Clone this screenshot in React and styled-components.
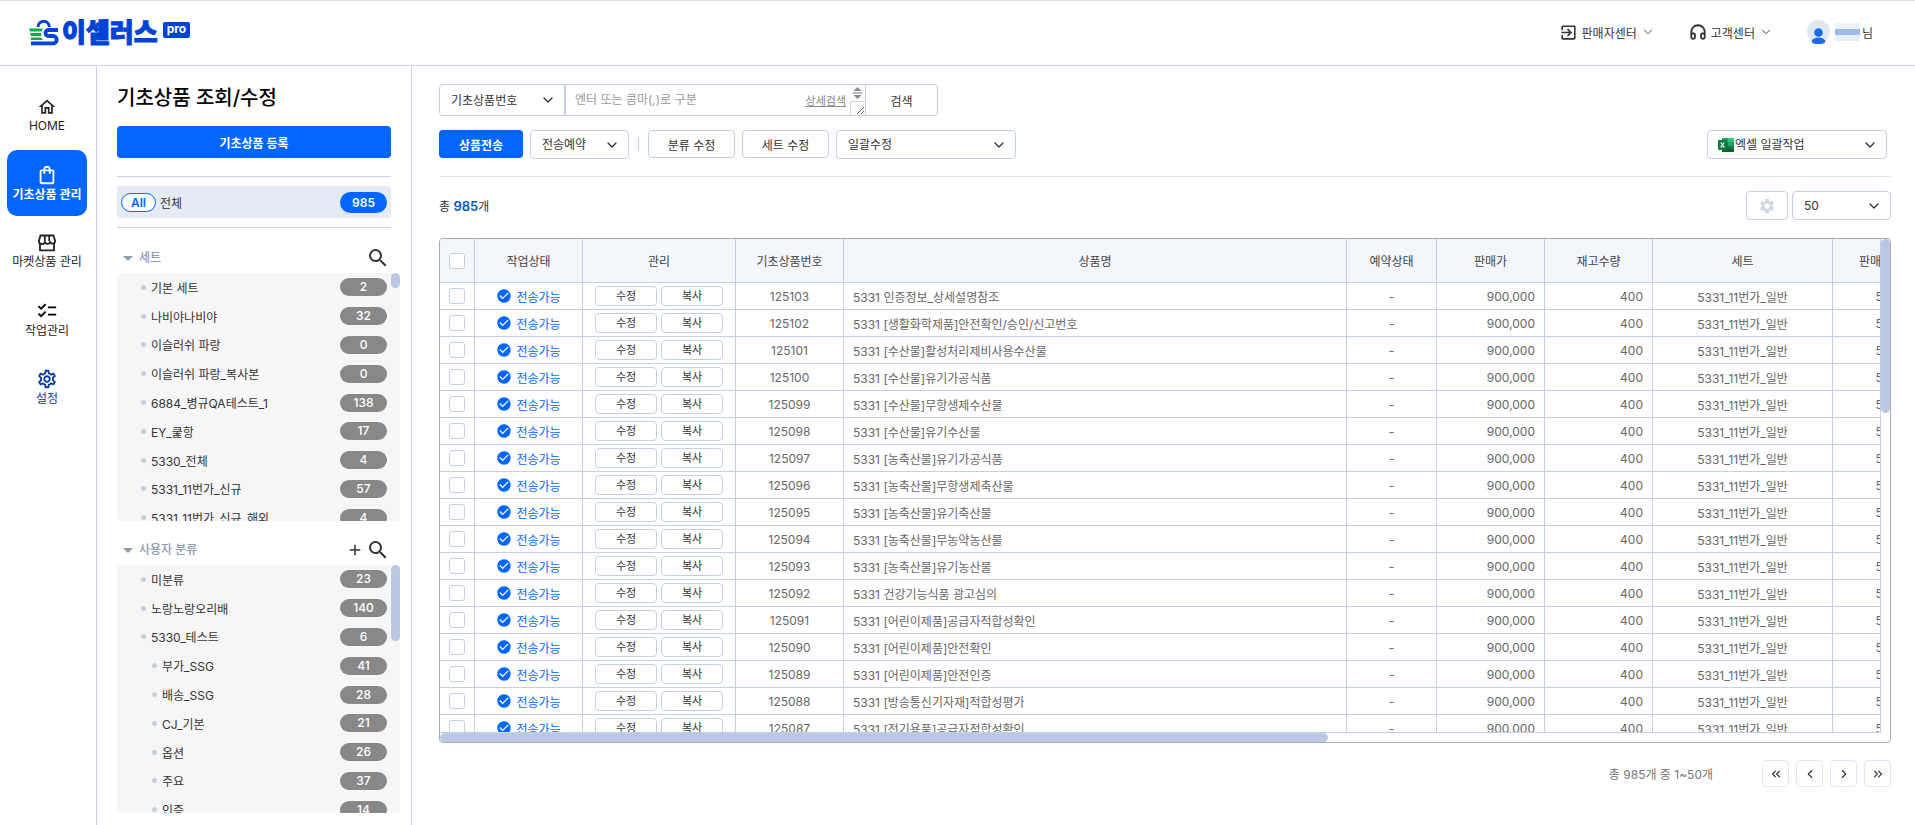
import React, { useState } from "react";
import styled, { createGlobalStyle } from "styled-components";
import {
  MdAdd,
  MdCheckCircle,
  MdChecklist,
  MdOutlineExitToApp,
  MdOutlineHome,
  MdOutlineSettings,
  MdOutlineShoppingBag,
  MdSearch,
  MdSettings,
} from "react-icons/md";
import {
  ChevronDown,
  ChevronLeft,
  ChevronRight,
  ChevronsLeft,
  ChevronsRight,
  Headphones,
} from "lucide-react";

const sets = [
  { name: "기본 세트", count: 2 },
  { name: "나비야나비야", count: 32 },
  { name: "이슬러쉬 파랑", count: 0 },
  { name: "이슬러쉬 파랑_복사본", count: 0 },
  { name: "6884_병규QA테스트_1", count: 138 },
  { name: "EY_쿭항", count: 17 },
  { name: "5330_전체", count: 4 },
  { name: "5331_11번가_신규", count: 57 },
  { name: "5331_11번가_신규_해외", count: 4 },
];

const categories = [
  { name: "미분류", count: 23 },
  { name: "노랑노랑오리배", count: 140 },
  { name: "5330_테스트", count: 6 },
  { name: "부가_SSG", count: 41, sub: true },
  { name: "배송_SSG", count: 28, sub: true },
  { name: "CJ_기본", count: 21, sub: true },
  { name: "옵션", count: 26, sub: true },
  { name: "주요", count: 37, sub: true },
  { name: "인증", count: 14, sub: true },
];

const products = [
  "5331 인증정보_상세설명참조",
  "5331 [생활화학제품]안전확인/승인/신고번호",
  "5331 [수산물]활성처리제비사용수산물",
  "5331 [수산물]유기가공식품",
  "5331 [수산물]무항생제수산물",
  "5331 [수산물]유기수산물",
  "5331 [농축산물]유기가공식품",
  "5331 [농축산물]무항생제축산물",
  "5331 [농축산물]유기축산물",
  "5331 [농축산물]무농약농산물",
  "5331 [농축산물]유기농산물",
  "5331 건강기능식품 광고심의",
  "5331 [어린이제품]공급자적합성확인",
  "5331 [어린이제품]안전확인",
  "5331 [어린이제품]안전인증",
  "5331 [방송통신기자재]적합성평가",
  "5331 [전기용품]공급자적합성확인",
].map((name, index) => ({ id: 125103 - index, name }));

function Logo() {
  return (
    <LogoLink href="#" aria-label="이셀러스 pro">
      <svg width="30" height="26" viewBox="0 0 30 26" fill="none">
        <path d="M9 7a5.700 5.700 0 0 1 11.400 0" stroke="#0043d6" strokeWidth="3" />
        <path d="M0 8.500h14l-1.500 3H1z" fill="#00b140" />
        <path d="M1 13h11l.5 3H2z" fill="#00b140" />
        <path d="M2 17.500h10l2 2.500H2z" fill="#00b140" />
        <path
          d="M29 10H19.500a3 3 0 0 0 0 6H24a3.700 3.700 0 0 1 0 7.400H2"
          stroke="#0043d6"
          strokeWidth="3.800"
        />
      </svg>
      <Wordmark>이셀러스</Wordmark>
      <ProTag>pro</ProTag>
    </LogoLink>
  );
}

function MarketIcon() {
  return (
    <svg width="20" height="20" viewBox="0 0 20 20" fill="none" stroke="#222" strokeWidth="1.800">
      <path d="M3.500 2.500h13l1.600 5.500a2.500 2.500 0 0 1-5 .2 2.600 2.600 0 0 1-5.200 0A2.500 2.500 0 0 1 1.900 8z" />
      <path d="M7.800 2.500v5.500M12.200 2.500v5.500M3 10v7.300h14V10" />
    </svg>
  );
}

function ExcelIcon() {
  return (
    <svg width="16" height="16" viewBox="0 0 16 16">
      <path d="M4 1h6v7H4z" fill="#21a366" />
      <path d="M10 1h6v4h-6z" fill="#33c481" />
      <path d="M4 5h6v5H4z" fill="#107c41" />
      <path d="M10 5h6v5h-6z" fill="#21a366" />
      <path d="M4 10h12v5H4z" fill="#185c37" />
      <path d="M10 9h6v3h-6z" fill="#107c41" />
      <rect x="0" y="3" width="9" height="10" rx="1" fill="#107c41" />
      <path d="M2.800 5.500l3.400 5M6.200 5.500l-3.400 5" stroke="#fff" strokeWidth="1.300" />
    </svg>
  );
}

function SelectBox({ label, options, width, icon, joined }) {
  return (
    <SelectWrap $width={width} $joined={joined}>
      {icon}
      <select aria-label={label}>
        {options.map((option) => (
          <option key={option}>{option}</option>
        ))}
      </select>
      <ChevronDown size={16} strokeWidth={2} />
    </SelectWrap>
  );
}

function TreeSection({ title, items, addable, thumb }) {
  return (
    <section>
      <SectionHead>
        <Triangle />
        <h2>{title}</h2>
        {addable && (
          <IconButton aria-label="분류 추가">
            <MdAdd size={18} />
          </IconButton>
        )}
        <IconButton aria-label={`${title} 검색`}>
          <MdSearch size={24} />
        </IconButton>
      </SectionHead>
      <TreeBox>
        <Tree>
          {items.map((item) => (
            <TreeItem key={item.name} $sub={item.sub}>
              <a href="#">{item.name}</a>
              <Count>{item.count}</Count>
            </TreeItem>
          ))}
        </Tree>
        <TreeThumb $height={thumb} />
      </TreeBox>
    </section>
  );
}

export default function App() {
  const [checked, setChecked] = useState([]);
  const allChecked = checked.length === products.length;

  function toggle(id) {
    setChecked(
      checked.includes(id) ? checked.filter((c) => c !== id) : [...checked, id]
    );
  }
  function toggleAll() {
    setChecked(allChecked ? [] : products.map((p) => p.id));
  }

  return (
    <Page>
      <GlobalStyle />
      <Header>
        <Logo />
        <TopMenu>
          <TopButton>
            <MdOutlineExitToApp size={19} />
            판매자센터
            <ChevronDown size={14} strokeWidth={1.5} />
          </TopButton>
          <TopButton>
            <Headphones size={18} strokeWidth={2.4} />
            고객센터
            <ChevronDown size={14} strokeWidth={1.5} />
          </TopButton>
          <UserButton>
            <svg width="23" height="24" viewBox="0 0 23 24">
              <circle cx="11.500" cy="11.500" r="11.500" fill="#e1e7f2" />
              <circle cx="11.500" cy="12.500" r="4.300" fill="#1a6be6" />
              <path d="M4.500 22a7 4.500 0 0 1 14 0 11 11 0 0 1-14 0z" fill="#1a6be6" />
            </svg>
            <MaskedName />님
          </UserButton>
        </TopMenu>
      </Header>
      <Body>
        <Nav>
          <NavItem href="#">
            <MdOutlineHome size={20} />
            HOME
          </NavItem>
          <NavItem href="#" $active>
            <MdOutlineShoppingBag size={22} />
            기초상품 관리
          </NavItem>
          <NavItem href="#">
            <MarketIcon />
            마켓상품 관리
          </NavItem>
          <NavItem href="#">
            <MdChecklist size={22} color="#000" />
            작업관리
          </NavItem>
          <NavItem href="#" $blue>
            <MdOutlineSettings size={22} />
            설정
          </NavItem>
        </Nav>
        <Sidebar>
          <SideTop>
            <h1>기초상품 조회/수정</h1>
            <RegisterButton>기초상품 등록</RegisterButton>
            <AllWrap>
              <AllLink href="#">
                <AllPill>All</AllPill>
                전체
                <AllCount>985</AllCount>
              </AllLink>
            </AllWrap>
          </SideTop>
          <TreeSection title="세트" items={sets} thumb={15} />
          <TreeSection title="사용자 분류" items={categories} thumb={76} addable />
        </Sidebar>
        <Main>
          <SearchBar>
            <SelectBox label="검색 조건" options={["기초상품번호"]} width={126} joined />
            <SearchField>
              <textarea aria-label="검색어" placeholder="엔터 또는 콤마(,)로 구분" />
              <a href="#">상세검색</a>
              <svg width="15" height="30" viewBox="0 0 15 30">
                <path d="M0 0h15v30H0z" fill="#fcfcfc" />
                <path d="M7.500 2l4 4h-8zM7.500 14l4-4h-8z" fill="#8a8a8a" />
                <path d="M3 8h9" stroke="#777" />
                <path d="M.5 30V16.500H15" fill="none" stroke="#d5d5d5" />
                <path d="M7 29l7-7M11 29l3-3" stroke="#555" />
              </svg>
            </SearchField>
            <SearchButton>검색</SearchButton>
          </SearchBar>
          <Toolbar>
            <PrimaryButton>상품전송</PrimaryButton>
            <SelectBox label="전송예약" options={["전송예약"]} width={99} />
            <Divider />
            <PlainButton>분류 수정</PlainButton>
            <PlainButton>세트 수정</PlainButton>
            <SelectBox label="일괄수정" options={["일괄수정"]} width={180} />
            <ToolbarEnd>
              <SelectBox
                label="엑셀 일괄작업"
                options={["엑셀 일괄작업"]}
                width={180}
                icon={<ExcelIcon />}
              />
            </ToolbarEnd>
          </Toolbar>
          <Summary>
            <p>
              총 <strong>985</strong>개
            </p>
            <GearButton aria-label="목록 설정">
              <MdSettings size={18} />
            </GearButton>
            <SelectBox label="목록 개수" options={["50", "100"]} width={99} />
          </Summary>
          <TableFrame>
            <TableView>
              <Table>
                <colgroup>
                  <col width="35" />
                  <col width="108" />
                  <col width="153" />
                  <col width="108" />
                  <col />
                  <col width="90" />
                  <col width="108" />
                  <col width="108" />
                  <col width="180" />
                  <col width="108" />
                </colgroup>
                <thead>
                  <tr>
                    <th>
                      <Check
                        type="checkbox"
                        aria-label="전체 선택"
                        checked={allChecked}
                        onChange={toggleAll}
                      />
                    </th>
                    <th>작업상태</th>
                    <th>관리</th>
                    <th>기초상품번호</th>
                    <th>상품명</th>
                    <th>예약상태</th>
                    <th>판매가</th>
                    <th>재고수량</th>
                    <th>세트</th>
                    <th>판매자코드</th>
                  </tr>
                </thead>
                <tbody>
                  {products.map((product) => (
                    <tr key={product.id}>
                      <td>
                        <Check
                          type="checkbox"
                          aria-label={`${product.id} 선택`}
                          checked={checked.includes(product.id)}
                          onChange={() => toggle(product.id)}
                        />
                      </td>
                      <td>
                        <Status>
                          <MdCheckCircle size={16} />
                          전송가능
                        </Status>
                      </td>
                      <td>
                        <Actions>
                          <RowButton>수정</RowButton>
                          <RowButton>복사</RowButton>
                        </Actions>
                      </td>
                      <td>{product.id}</td>
                      <NameCell>{product.name}</NameCell>
                      <td>-</td>
                      <NumberCell>900,000</NumberCell>
                      <NumberCell>400</NumberCell>
                      <td>5331_11번가_일반</td>
                      <td>533</td>
                    </tr>
                  ))}
                </tbody>
              </Table>
            </TableView>
            <ScrollTrackY>
              <ThumbY />
            </ScrollTrackY>
            <ScrollTrackX>
              <ThumbX />
            </ScrollTrackX>
          </TableFrame>
          <Pagination>
            <p>총 985개 중 1~50개</p>
            <PageButton aria-label="처음">
              <ChevronsLeft size={14} />
            </PageButton>
            <PageButton aria-label="이전">
              <ChevronLeft size={14} />
            </PageButton>
            <PageButton aria-label="다음">
              <ChevronRight size={14} />
            </PageButton>
            <PageButton aria-label="마지막">
              <ChevronsRight size={14} />
            </PageButton>
          </Pagination>
        </Main>
      </Body>
    </Page>
  );
}

const GlobalStyle = createGlobalStyle`
  * {
    box-sizing: border-box;
  }
  body {
    margin: 0;
    background: #fff;
  }
  body, button, select, textarea {
    font-family: Inter, "Noto Sans CJK KR", sans-serif;
    font-size: 12px;
    color: #333;
  }
  h1, h2, p, ul {
    margin: 0;
    padding: 0;
  }
  a {
    color: inherit;
    text-decoration: none;
  }
  button {
    padding: 0;
    border: none;
    background: none;
    cursor: pointer;
  }
  svg {
    flex-shrink: 0;
  }
`;
const Page = styled.div`
  height: 100vh;
  min-height: 825px;
  display: flex;
  flex-direction: column;
  overflow: hidden;
`;
const Header = styled.header`
  height: 66px;
  flex-shrink: 0;
  padding: 0 42px 0 29px;
  display: flex;
  align-items: center;
  justify-content: space-between;
  border-top: 1px solid #dfdfdf;
  border-bottom: 1px solid #c8d0e2;
`;
const LogoLink = styled.a`
  display: flex;
  align-items: center;
`;
const Wordmark = styled.span`
  margin-left: 3px;
  font-size: 26px;
  line-height: 30px;
  font-weight: 900;
  color: #0043d6;
  -webkit-text-stroke: 1px #0043d6;
`;
const ProTag = styled.span`
  height: 16px;
  margin: 0 0 6px 5px;
  padding: 0 4px;
  border-radius: 2px;
  background: #0043d6;
  color: #fff;
  font-size: 12px;
  line-height: 14px;
  font-weight: 700;
`;
const TopMenu = styled.div`
  padding-bottom: 2px;
  display: flex;
  align-items: center;
  gap: 34px;
`;
const TopButton = styled.button`
  display: flex;
  align-items: center;
  gap: 4px;
`;
const UserButton = styled(TopButton)`
  gap: 2px;
`;
const MaskedName = styled.span`
  width: 25px;
  height: 18px;
  margin-left: 3px;
  background: linear-gradient(
    #eef3fb 6px,
    #9dbbe9 6px,
    #9dbbe9 12px,
    #e6eefa 12px
  );
`;
const Body = styled.div`
  flex: 1;
  display: flex;
`;
const Nav = styled.nav`
  width: 97px;
  flex-shrink: 0;
  padding: 16px 9px 0 7px;
  display: flex;
  flex-direction: column;
  gap: 2px;
  border-right: 1px solid #c8d0e2;
`;
const NavItem = styled.a`
  height: 66px;
  padding-top: 2px;
  display: flex;
  flex-direction: column;
  align-items: center;
  justify-content: center;
  border-radius: 10px;
  background: ${(props) => (props.$active ? "#0066ff" : "transparent")};
  color: ${(props) =>
    props.$active ? "#fff" : props.$blue ? "#0b3f99" : "#222"};
  font-weight: ${(props) => (props.$active ? 700 : 400)};
  line-height: 18px;
  white-space: nowrap;
`;
const Sidebar = styled.aside`
  width: 315px;
  flex-shrink: 0;
  padding: 0 11px 0 20px;
  border-right: 1px solid #c8d0e2;
`;
const SideTop = styled.div`
  margin-right: 9px;
  h1 {
    padding-top: 4px;
    font-size: 20px;
    line-height: 56px;
    font-weight: 500;
    color: #000;
  }
`;
const RegisterButton = styled.button`
  width: 100%;
  height: 32px;
  border-radius: 4px;
  background: #0066ff;
  color: #fff;
  font-weight: 700;
`;
const AllWrap = styled.div`
  margin: 18px 0 1px;
  padding: 9px 0;
  border-top: 1px solid #c8d0e2;
  border-bottom: 1px solid #c8d0e2;
`;
const AllLink = styled.a`
  height: 32px;
  padding: 0 4px;
  display: flex;
  align-items: center;
  gap: 4px;
  border-radius: 4px;
  background: #e5ebf5;
`;
const AllPill = styled.span`
  width: 35px;
  border: 1px solid #0066ff;
  border-radius: 10px;
  background: #fff;
  color: #0066ff;
  font-weight: 600;
  line-height: 17px;
  text-align: center;
`;
const AllCount = styled.span`
  width: 47px;
  margin-left: auto;
  border-radius: 11px;
  background: #0066ff;
  color: #fff;
  font-weight: 600;
  line-height: 21px;
  text-align: center;
`;
const SectionHead = styled.div`
  height: 44px;
  margin-right: 9px;
  padding: 14px 1px 0 6px;
  display: flex;
  align-items: center;
  gap: 2px;
  h2 {
    margin: 0 auto 0 4px;
    font-size: 12px;
    line-height: 18px;
    font-weight: 500;
    color: #8b9bb0;
  }
`;
const Triangle = styled.span`
  border: 5px solid transparent;
  border-top: 5px solid #8b9bb0;
  border-bottom: none;
`;
const IconButton = styled.button`
  display: flex;
`;
const TreeBox = styled.div`
  height: 248px;
  display: flex;
  border-radius: 4px;
  background: #f6f6f6;
  overflow: hidden;
`;
const Tree = styled.ul`
  flex: 1;
  height: 288px;
  display: grid;
  grid-template-rows: repeat(10, 1fr);
  list-style: none;
`;
const TreeItem = styled.li`
  padding: 0 4px 0 ${(props) => (props.$sub ? 35 : 24)}px;
  display: flex;
  align-items: center;
  gap: 5px;
  &::before {
    content: "";
    width: 5px;
    height: 5px;
    border-radius: 50%;
    background: #c5cfe2;
  }
`;
const Count = styled.span`
  width: 47px;
  margin-left: auto;
  border-radius: 9px;
  background: #888;
  color: #fff;
  font-weight: 500;
  line-height: 18px;
  text-align: center;
`;
const TreeThumb = styled.div`
  width: 9px;
  height: ${(props) => props.$height}px;
  border-radius: 5px;
  background: #b9c9e4;
`;
const Main = styled.main`
  flex: 1;
  min-width: 0;
  padding: 18px 24px 0 27px;
`;
const SearchBar = styled.div`
  height: 32px;
  display: flex;
`;
const SelectWrap = styled.span`
  position: relative;
  width: ${(props) => props.$width}px;
  height: ${(props) => (props.$joined ? 32 : 29)}px;
  display: flex;
  align-items: center;
  padding-left: 10px;
  border: 1px solid #c5cfe2;
  border-radius: ${(props) => (props.$joined ? "4px 0 0 4px" : "4px")};
  select {
    flex: 1;
    min-width: 0;
    height: 100%;
    padding: 0 28px 0 1px;
    border: none;
    appearance: none;
    background: none;
  }
  svg:last-child {
    position: absolute;
    right: 8px;
    pointer-events: none;
  }
`;
const SearchField = styled.div`
  width: 300px;
  display: flex;
  align-items: center;
  border: 1px solid #c5cfe2;
  border-right: none;
  textarea {
    flex: 1;
    min-width: 0;
    height: 30px;
    padding: 0 0 0 9px;
    border: none;
    outline: none;
    resize: none;
    overflow: hidden;
    background: none;
    line-height: 30px;
    &::placeholder {
      color: #999;
    }
  }
  a {
    margin-right: 4px;
    font-size: 11px;
    color: #888;
    text-decoration: underline;
  }
`;
const SearchButton = styled.button`
  width: 73px;
  border: 1px solid #c5cfe2;
  border-radius: 0 4px 4px 0;
`;
const Toolbar = styled.div`
  height: 61px;
  padding-top: 14px;
  display: flex;
  align-items: flex-start;
  gap: 7px;
  border-bottom: 1px solid #e1e6f0;
`;
const PlainButton = styled.button`
  width: 87px;
  height: 28px;
  border: 1px solid #c5cfe2;
  border-radius: 4px;
`;
const PrimaryButton = styled(PlainButton)`
  width: 84px;
  border: none;
  background: #0066ff;
  color: #fff;
  font-weight: 700;
`;
const Divider = styled.span`
  width: 1px;
  height: 14px;
  margin: 7px 2px 0;
  background: #c5cfe2;
`;
const ToolbarEnd = styled.div`
  margin: 0 4px 0 auto;
`;
const Summary = styled.div`
  padding: 14px 0 18px;
  display: flex;
  align-items: center;
  gap: 4px;
  p {
    margin-right: auto;
  }
  strong {
    font-size: 13px;
    font-weight: 600;
    color: #0b55c4;
  }
`;
const GearButton = styled.button`
  width: 42px;
  height: 29px;
  display: flex;
  align-items: center;
  justify-content: center;
  border: 1px solid #c5cfe2;
  border-radius: 4px;
  color: #d0d8e4;
`;
const TableFrame = styled.div`
  height: 505px;
  display: grid;
  grid-template-columns: minmax(0, 1fr) 9px;
  grid-template-rows: minmax(0, 1fr) 9px;
  border: 1px solid #a9abb0;
  border-radius: 4px;
  overflow: hidden;
`;
const TableView = styled.div`
  overflow: hidden;
  border-right: 1px solid #c5cfe2;
  border-bottom: 1px solid #c5cfe2;
`;
const Table = styled.table`
  width: 100%;
  min-width: 1501px;
  table-layout: fixed;
  border-collapse: separate;
  border-spacing: 0;
  th,
  td {
    padding: 0;
    border-right: 1px solid #c5cfe2;
    border-bottom: 1px solid #c5cfe2;
    text-align: center;
    white-space: nowrap;
  }
  th {
    height: 44px;
    background: #f3f6fb;
    color: #444;
    font-weight: 400;
  }
  td {
    height: 27px;
    color: #666;
  }
`;
const Check = styled.input`
  width: 16px;
  height: 16px;
  display: block;
  margin: 0 auto;
  appearance: none;
  border: 1px solid #c5cfe2;
  border-radius: 3px;
  background: #fff;
  &:checked {
    background: #0066ff;
  }
`;
const Status = styled.span`
  display: flex;
  align-items: center;
  justify-content: center;
  gap: 4px;
  color: #0066ff;
`;
const Actions = styled.div`
  display: flex;
  justify-content: center;
  gap: 4px;
`;
const RowButton = styled.button`
  width: 62px;
  height: 20px;
  border: 1px solid #c5cfe2;
  border-radius: 4px;
  font-size: 11px;
  line-height: 16px;
`;
const NameCell = styled.td`
  && {
    padding-left: 9px;
    text-align: left;
  }
`;
const NumberCell = styled.td`
  && {
    padding-right: 9px;
    text-align: right;
  }
`;
const ScrollTrackY = styled.div`
  grid-row: span 2;
`;
const ThumbY = styled.div`
  height: 174px;
  border-radius: 5px;
  background: #b9c9e4;
`;
const ScrollTrackX = styled.div`
  height: 9px;
`;
const ThumbX = styled.div`
  width: 888px;
  height: 9px;
  border-radius: 5px;
  background: #b9c9e4;
`;
const Pagination = styled.div`
  margin-top: 17px;
  display: flex;
  align-items: center;
  justify-content: flex-end;
  gap: 7px;
  p {
    margin-right: 42px;
    color: #777;
  }
`;
const PageButton = styled.button`
  width: 27px;
  height: 27px;
  display: flex;
  align-items: center;
  justify-content: center;
  border: 1px solid #e1e8f5;
  border-radius: 4px;
`;
